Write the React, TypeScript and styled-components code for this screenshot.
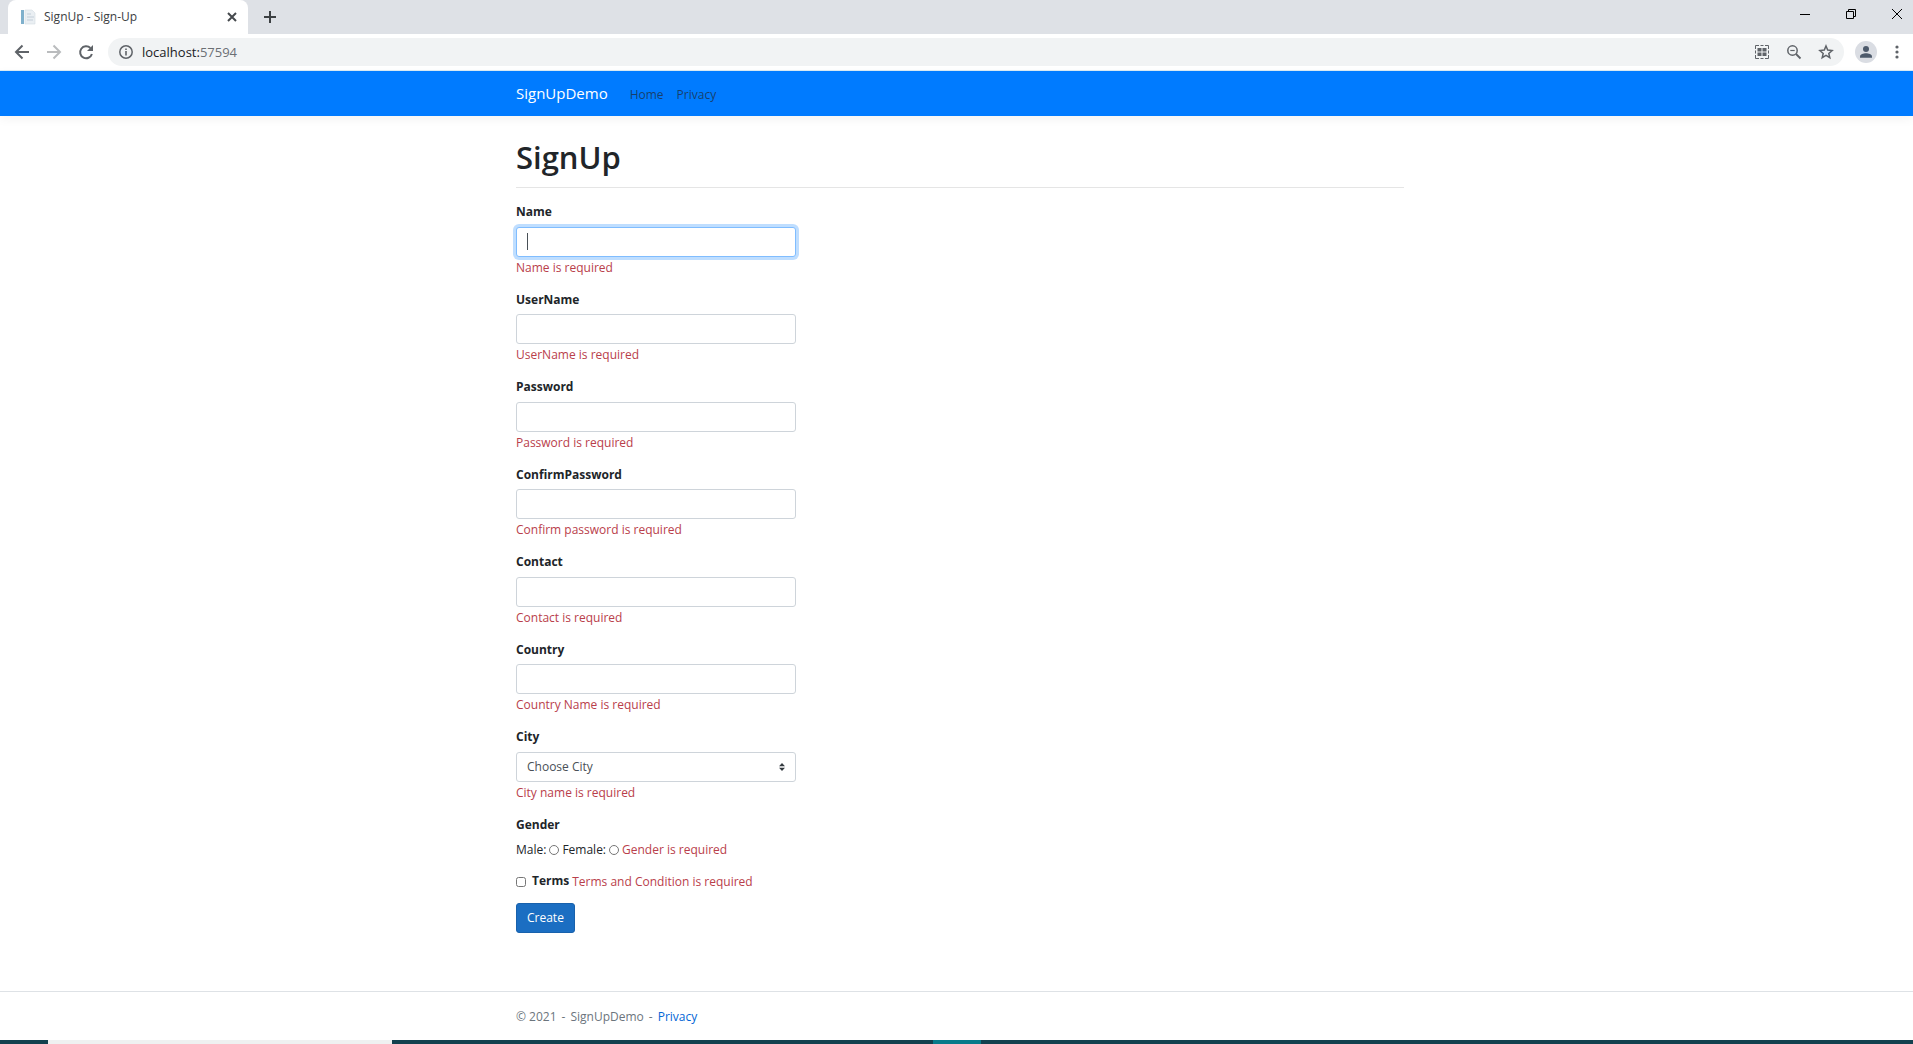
import React from 'react';
import styled, { createGlobalStyle, css } from 'styled-components';

const GlobalStyle = createGlobalStyle`
  *, *::before, *::after { box-sizing: border-box; }
  body {
    margin: 0;
    background: #fff;
    color: #212529;
    font-family: 'Open Sans', 'Noto Sans', sans-serif;
    font-size: 12px;
    line-height: 20px;
  }
  button, input, select { font: inherit; color: inherit; margin: 0; }
`;

const Window = styled.div`
  display: flex;
  flex-direction: column;
  min-height: 100vh;
`;

const TabStrip = styled.div`
  display: flex;
  align-items: flex-start;
  height: 34px;
  padding-left: 8px;
  background: #dee1e6;
`;

const Tab = styled.div`
  display: flex;
  align-items: center;
  width: 240px;
  height: 34px;
  padding: 0 9px 0 12px;
  gap: 8px;
  border-radius: 8px 8px 0 0;
  background: #fff;
  color: #3c4043;
`;

const TabTitle = styled.span`
  flex: 1;
`;

const IconButton = styled.button<{ $w?: number; $h?: number; $tone?: string }>`
  display: flex;
  flex: none;
  align-items: center;
  justify-content: center;
  width: ${p => p.$w ?? 32}px;
  height: ${p => p.$h ?? 32}px;
  padding: 0;
  border: 0;
  background: none;
  color: ${p => p.$tone ?? '#5f6368'};
`;

const WindowControls = styled.div`
  display: flex;
  gap: 14px;
  margin-left: auto;
`;

const Toolbar = styled.div`
  display: flex;
  align-items: center;
  height: 37px;
  padding: 0 1px 1px 6px;
  border-bottom: 1px solid #dcecf5;
`;

const AddressBar = styled.div`
  display: flex;
  flex: 1;
  align-items: center;
  height: 28px;
  margin: 0 6px;
  padding: 0 2px;
  border-radius: 14px;
  background: #f1f3f4;
`;

const Url = styled.span`
  flex: 1;
  color: #202124;
  font-size: 13px;
`;

const Port = styled.span`
  color: #6b6f74;
`;

const NavBar = styled.header`
  height: 45px;
  padding-left: 7px;
  background: #007bff;
  box-shadow: 0 3px 10px rgba(0, 0, 0, 0.05);
`;

const Container = styled.div`
  width: 100%;
  max-width: 888px;
  margin: 0 auto;
`;

const NavRow = styled(Container)`
  display: flex;
  align-items: baseline;
  padding-top: 12px;
  gap: 13px;
`;

const Brand = styled.a`
  margin-right: 9px;
  color: #fff;
  font-size: 15px;
  text-decoration: none;
`;

const NavLink = styled.a`
  color: rgba(33, 37, 41, 0.7);
  text-decoration: none;
`;

const Main = styled.main`
  flex: 1;
  padding: 20px 0 48px 7px;
`;

const Title = styled.h1`
  margin: 0;
  padding-bottom: 9px;
  border-bottom: 1px solid #e5e5e5;
  font-size: 31px;
  font-weight: 600;
  line-height: 42px;
`;

const Form = styled.form`
  display: flex;
  flex-direction: column;
  align-items: flex-start;
  gap: 11px;
  width: 280px;
  padding-top: 13px;
`;

const Field = styled.div`
  display: flex;
  flex-direction: column;
  width: 100%;
`;

const labelText = css`
  font-size: 12px;
  font-weight: 700;
  line-height: 1.875;
`;

const Label = styled.label`
  ${labelText}
  margin-bottom: 3px;
`;

const GroupLabel = styled.div`
  ${labelText}
  margin-bottom: 3px;
`;

const control = css`
  width: 100%;
  height: 30px;
  padding: 0 10px;
  border: 1px solid #ced4da;
  border-radius: 3px;
  background-color: #fff;
  outline: 0;
`;

const TextInput = styled.input<{ $active?: boolean }>`
  ${control}
  ${p =>
    p.$active &&
    css`
      border-color: #80bdff;
      box-shadow: 0 0 0 3px rgba(0, 123, 255, 0.25);
      caret-color: transparent;
      background: linear-gradient(#495057, #495057) 10px center / 1px 17px no-repeat #fff;
    `}
`;

const SelectBox = styled.div`
  position: relative;
  height: 30px;
`;

const Select = styled.select`
  ${control}
  appearance: none;
  color: #495057;
`;

const SelectArrows = styled.svg`
  position: absolute;
  top: 11px;
  right: 11px;
  pointer-events: none;
`;

const ErrorText = styled.span`
  color: #b9404b;
  line-height: 21px;
  white-space: nowrap;
`;

const Row = styled.div`
  display: flex;
  align-items: center;
  height: 21px;
  gap: 3px;
  white-space: nowrap;
`;

const Tick = styled.input`
  width: 10px;
  height: 10px;
`;

const TermsLabel = styled.label`
  ${labelText}
  padding-left: 3px;
`;

const CreateButton = styled.button`
  height: 30px;
  padding: 0 10px;
  border: 1px solid #1861ac;
  border-radius: 3px;
  background: #1b6ec2;
  color: #fff;
`;

const Footer = styled.footer`
  height: 49px;
  padding: 15px 0 0 7px;
  border-top: 1px solid #dee2e6;
  color: #6c757d;
`;

const FooterRow = styled(Container)`
  display: flex;
  gap: 5px;
`;

const FooterLink = styled.a`
  color: #0366d6;
  text-decoration: none;
`;

const Taskbar = styled.div`
  display: flex;
  height: 4px;
  background: #12414f;
`;

const TaskSegment = styled.div<{ $width: number; $color: string }>`
  width: ${p => p.$width}px;
  background: ${p => p.$color};
`;

const textFields = [
  { id: 'name', label: 'Name', error: 'Name is required', type: 'text' },
  { id: 'username', label: 'UserName', error: 'UserName is required', type: 'text' },
  { id: 'password', label: 'Password', error: 'Password is required', type: 'password' },
  { id: 'confirm', label: 'ConfirmPassword', error: 'Confirm password is required', type: 'password' },
  { id: 'contact', label: 'Contact', error: 'Contact is required', type: 'text' },
  { id: 'country', label: 'Country', error: 'Country Name is required', type: 'text' },
];

const Favicon = () => (
  <svg width="16" height="16" viewBox="0 0 16 16" aria-hidden="true">
    <path d="M1 1h3v14H1z" fill="#7fb0cc" />
    <path d="M5 1h7l3 3v11H5z" fill="#eaeff3" stroke="#d5dce2" strokeWidth="0.6" />
    <path d="M7 5h4M7 8h7M7 11h6" stroke="#c3ced9" />
  </svg>
);

type StrokeProps = { d: string; size?: number; width?: number };
const Stroke = ({ d, size = 16, width = 2 }: StrokeProps) => (
  <svg width={size} height={size} viewBox={`0 0 ${size} ${size}`} fill="none" stroke="currentColor" strokeWidth={width} aria-hidden="true">
    <path d={d} />
  </svg>
);

const ReloadIcon = () => (
  <svg width="16" height="16" viewBox="0 0 16 16" aria-hidden="true">
    <path d="M13.900 10A6 6 0 1 1 12.400 4" fill="none" stroke="currentColor" strokeWidth="2" />
    <path d="M15 1v6H9z" fill="currentColor" />
  </svg>
);

const InfoIcon = () => (
  <svg width="16" height="16" viewBox="0 0 16 16" aria-hidden="true">
    <circle cx="8" cy="8" r="6.2" fill="none" stroke="currentColor" strokeWidth="1.5" />
    <path d="M7.2 7h1.6v4.4H7.2zM7.2 4.4h1.6V6H7.2z" fill="currentColor" />
  </svg>
);

const QrIcon = () => (
  <svg width="16" height="16" viewBox="0 0 16 16" aria-hidden="true">
    <path d="M1.500 5V1.500H5M6.500 1.500h3M11 1.500h3.500V5M14.500 6.500v3M14.500 11v3.500H11M9.500 14.500h-3M5 14.500H1.500V11M1.500 9.500v-3" fill="none" stroke="currentColor" />
    <path d="M3.500 4h4v3.500h-4zM8.500 4h4v3.500h-4zM3.500 8.500h4V12h-4zM8.500 8.500h4V12h-4z" fill="currentColor" />
  </svg>
);

const ZoomOutIcon = () => (
  <svg width="16" height="16" viewBox="0 0 16 16" fill="none" stroke="currentColor" aria-hidden="true">
    <circle cx="6.500" cy="6.500" r="4.700" strokeWidth="1.500" />
    <path d="M10 10l4.500 4.500" strokeWidth="1.800" />
    <path d="M4.300 6.500h4.400" strokeWidth="1.200" />
  </svg>
);

const StarIcon = () => (
  <svg width="16" height="16" viewBox="0 0 16 16" aria-hidden="true">
    <path d="M8 2l1.700 4.100 4.400.400-3.300 2.900 1 4.300L8 11.400l-3.800 2.300 1-4.300-3.300-2.900 4.400-.400z" fill="none" stroke="currentColor" strokeWidth="1.500" />
  </svg>
);

const ProfileIcon = () => (
  <svg width="22" height="22" viewBox="0 0 22 22" aria-hidden="true">
    <circle cx="11" cy="11" r="11" fill="#dadde3" />
    <circle cx="11" cy="8" r="3" fill="#4d5a6b" />
    <path d="M5 16.800v-1.300C5 13.300 8.500 12.300 11 12.300s6 1 6 3.200v1.300z" fill="#4d5a6b" />
  </svg>
);

const MenuIcon = () => (
  <svg width="16" height="16" viewBox="0 0 16 16" fill="currentColor" aria-hidden="true">
    <circle cx="8" cy="3" r="1.600" />
    <circle cx="8" cy="8" r="1.600" />
    <circle cx="8" cy="13" r="1.600" />
  </svg>
);

export default function App() {
  return (
    <Window>
      <GlobalStyle />
      <TabStrip>
        <Tab>
          <Favicon />
          <TabTitle>SignUp - Sign-Up</TabTitle>
          <IconButton $w={14} $h={16} $tone="#45494d" aria-label="Close tab">
            <Stroke size={10} width={2} d="M1 1l8 8M9 1l-8 8" />
          </IconButton>
        </Tab>
        <IconButton $w={44} $h={34} $tone="#3c4043" aria-label="New tab">
          <Stroke size={12} width={2} d="M6 0v12M0 6h12" />
        </IconButton>
        <WindowControls>
          <IconButton $h={28} $tone="#000" aria-label="Minimize">
            <Stroke size={10} width={1} d="M0 5.500h10" />
          </IconButton>
          <IconButton $h={28} $tone="#000" aria-label="Restore">
            <Stroke size={10} width={1} d="M.5 2.500h7v7h-7zM2.500 2.500v-2h7v7h-2" />
          </IconButton>
          <IconButton $h={28} $tone="#000" aria-label="Close">
            <Stroke size={10} width={1} d="M0 0l10 10M10 0L0 10" />
          </IconButton>
        </WindowControls>
      </TabStrip>
      <Toolbar>
        <IconButton $h={28} aria-label="Back">
          <Stroke d="M15 8H2M8.500 1.500L2 8l6.500 6.500" />
        </IconButton>
        <IconButton $h={28} $tone="#babcbe" aria-label="Forward">
          <Stroke d="M1 8h13M7.500 1.500L14 8l-6.500 6.500" />
        </IconButton>
        <IconButton $h={28} aria-label="Reload">
          <ReloadIcon />
        </IconButton>
        <AddressBar>
          <IconButton $h={28} aria-label="Site information">
            <InfoIcon />
          </IconButton>
          <Url>
            localhost:<Port>57594</Port>
          </Url>
          <IconButton $h={28} aria-label="QR code">
            <QrIcon />
          </IconButton>
          <IconButton $h={28} aria-label="Zoom">
            <ZoomOutIcon />
          </IconButton>
          <IconButton $h={28} aria-label="Bookmark">
            <StarIcon />
          </IconButton>
        </AddressBar>
        <IconButton $h={28} aria-label="Profile">
          <ProfileIcon />
        </IconButton>
        <IconButton $w={30} $h={28} aria-label="Menu">
          <MenuIcon />
        </IconButton>
      </Toolbar>

      <NavBar>
        <NavRow as="nav">
          <Brand href="#">SignUpDemo</Brand>
          <NavLink href="#">Home</NavLink>
          <NavLink href="#">Privacy</NavLink>
        </NavRow>
      </NavBar>

      <Main>
        <Container>
          <Title>SignUp</Title>
          <Form noValidate onSubmit={e => e.preventDefault()}>
            {textFields.map((f, i) => (
              <Field key={f.id}>
                <Label htmlFor={f.id}>{f.label}</Label>
                <TextInput id={f.id} type={f.type} $active={i === 0} autoFocus={i === 0} />
                <ErrorText>{f.error}</ErrorText>
              </Field>
            ))}
            <Field>
              <Label htmlFor="city">City</Label>
              <SelectBox>
                <Select id="city">
                  <option>Choose City</option>
                </Select>
                <SelectArrows width="6" height="8" viewBox="0 0 6 8" aria-hidden="true">
                  <path d="M3 0l3 3.300H0zM3 8L0 4.700h6z" fill="#343a40" />
                </SelectArrows>
              </SelectBox>
              <ErrorText>City name is required</ErrorText>
            </Field>
            <Field role="radiogroup" aria-labelledby="gender">
              <GroupLabel id="gender">Gender</GroupLabel>
              <Row>
                <label htmlFor="male">Male:</label>
                <Tick id="male" type="radio" name="gender" />
                <label htmlFor="female">Female:</label>
                <Tick id="female" type="radio" name="gender" />
                <ErrorText>Gender is required</ErrorText>
              </Row>
            </Field>
            <Row>
              <Tick id="terms" type="checkbox" />
              <TermsLabel htmlFor="terms">Terms</TermsLabel>
              <ErrorText>Terms and Condition is required</ErrorText>
            </Row>
            <CreateButton type="submit">Create</CreateButton>
          </Form>
        </Container>
      </Main>

      <Footer>
        <FooterRow>
          <span>© 2021</span>
          <span>-</span>
          <span>SignUpDemo</span>
          <span>-</span>
          <FooterLink href="#">Privacy</FooterLink>
        </FooterRow>
      </Footer>
      <Taskbar>
        <TaskSegment $width={48} $color="#12414f" />
        <TaskSegment $width={344} $color="#eff1f1" />
        <TaskSegment $width={541} $color="#12414f" />
        <TaskSegment $width={48} $color="#087b8a" />
      </Taskbar>
    </Window>
  );
}
